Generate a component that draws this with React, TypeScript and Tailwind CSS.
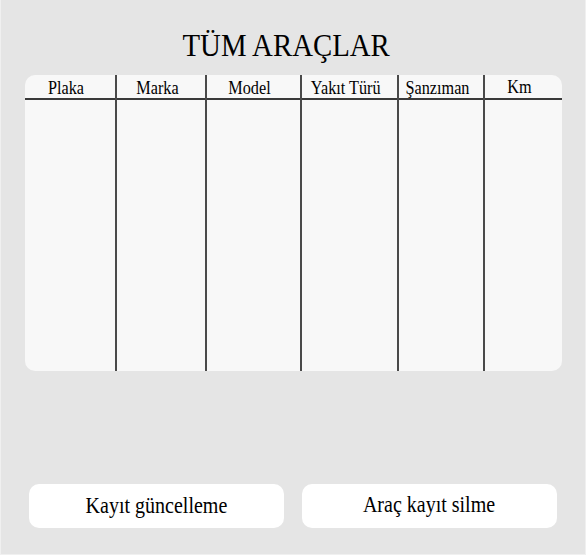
import React from "react";

const cols = [
  { label: "Plaka", w: "w-[92px]" },
  { label: "Marka", w: "w-[90px]" },
  { label: "Model", w: "w-[95px]" },
  { label: "Yakıt Türü", w: "w-[97px]" },
  { label: "Şanzıman", w: "w-[86px]" },
  { label: "Km", w: "w-[77px]" },
];

export default function App() {
  return (
    <div
      className="w-[586px] h-[555px] bg-[#e5e5e5] flex flex-col items-center border-x border-b border-[#f0f0f0] text-black"
      style={{ fontFamily: '"Liberation Serif", "Times New Roman", serif' }}
    >
      <div className="mt-[29px] h-[32px] flex justify-center w-full pr-[14px]">
        <h1 className="text-[32px] leading-none scale-x-[0.9] whitespace-nowrap">TÜM ARAÇLAR</h1>
      </div>
      <div className="mt-[14px] w-[537px] h-[296px] bg-[#f8f8f8] rounded-[10px] flex overflow-hidden">
        {cols.map((c, i) => (
          <div
            key={c.label}
            className={`${c.w} h-full flex flex-col ${i < cols.length - 1 ? "border-r-2 border-[#4a4a4a]" : ""}`}
          >
            <div
              className={`h-[25px] border-b-2 border-[#3a3a3a] flex justify-center pr-[7px] ${i === 5 ? "pt-[3px]" : "pt-[4px]"}`}
            >
              <span className="text-[18px] leading-none scale-x-[0.9] whitespace-nowrap">{c.label}</span>
            </div>
          </div>
        ))}
      </div>
      <div className="mt-[113px] w-[528px] flex gap-[18px]">
        <button className="flex-1 h-[44px] bg-white rounded-[10px] flex items-center justify-center pb-[2px]">
          <span className="text-[23px] leading-none scale-x-[0.87] whitespace-nowrap">Kayıt güncelleme</span>
        </button>
        <button className="flex-1 h-[44px] bg-white rounded-[10px] flex items-center justify-center pb-[4px]">
          <span className="text-[23px] leading-none scale-x-[0.87] whitespace-nowrap">Araç kayıt silme</span>
        </button>
      </div>
    </div>
  );
}
